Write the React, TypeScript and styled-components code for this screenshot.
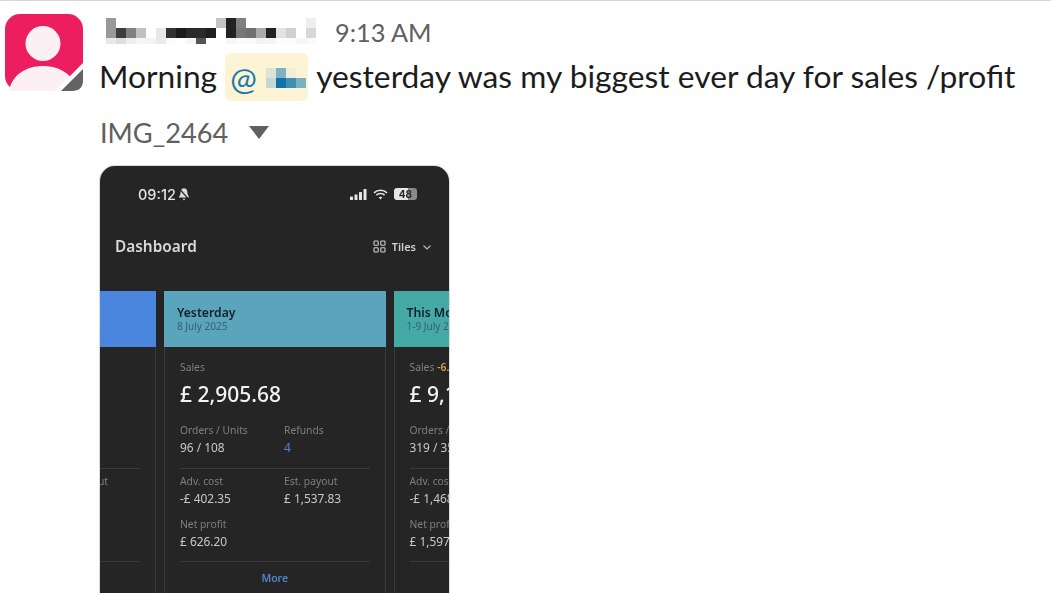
import styled, { createGlobalStyle } from "styled-components";

const GlobalStyle = createGlobalStyle`
  html, body {
    margin: 0;
    padding: 0;
    background: #ffffff;
    overflow: hidden;
  }
`;

const Page = styled.div`
  width: 1051px;
  height: 593px;
  box-sizing: border-box;
  border-top: 1px solid #d8d8d8;
  padding: 13px 0 0 5px;
  display: flex;
  align-items: flex-start;
  gap: 17px;
  overflow: hidden;
  font-family: "Lato", "Liberation Sans", sans-serif;
  color: #1d1c1d;
`;

const AvatarSvg = styled.svg`
  width: 78px;
  height: 77px;
  flex: none;
`;

const Body = styled.div`
  flex: 1;
  min-width: 0;
  display: flex;
  flex-direction: column;
`;

const HeadRow = styled.div`
  height: 31px;
  padding-top: 4px;
  display: flex;
  align-items: flex-start;
  gap: 19px;
`;

const Mosaic = styled.div<{ $w: number; $h: number; $cols: number }>`
  display: grid;
  grid-template-columns: repeat(${(p) => p.$cols}, ${(p) => p.$w}px);
  grid-auto-rows: ${(p) => p.$h}px;
  flex: none;
`;

const NameMosaic = styled(Mosaic)`
  margin-left: 6px;
  height: 26px;
  overflow: hidden;
`;

const Pixel = styled.span<{ $c: string }>`
  background: ${(p) => p.$c};
`;

const Time = styled.span`
  font-size: 25.3px;
  line-height: 28px;
  color: #616061;
`;

const Message = styled.div`
  margin: 4px 0 0 -1px;
  height: 46px;
  display: flex;
  align-items: center;
  gap: 8px;
  font-size: 31.75px;
  white-space: nowrap;
`;

const Mention = styled.span`
  width: 83px;
  height: 48px;
  margin-top: 2px;
  box-sizing: border-box;
  padding: 2px 0 0 5px;
  background: #fdf3d5;
  border-radius: 6px;
  display: flex;
  align-items: center;
  gap: 9px;
  color: #1a7aab;
`;

const FileRow = styled.div`
  margin-top: 14px;
  display: flex;
  align-items: center;
  gap: 21px;
  height: 38px;
  font-size: 27.2px;
  color: #616061;
`;

const Caret = styled.span`
  width: 0;
  height: 0;
  border-left: 10px solid transparent;
  border-right: 10px solid transparent;
  border-top: 13px solid #616061;
`;

const Phone = styled.div`
  margin-top: 15px;
  width: 349px;
  height: 440px;
  flex: none;
  background: #252525;
  border-radius: 15px 15px 0 0;
  box-shadow: 0 0 0 1px #dcdcdc;
  overflow: hidden;
  font-family: "Noto Sans", "Open Sans", sans-serif;
  color: #e8e8e8;
`;

const Screen = styled.div`
  filter: blur(0.45px);
`;

const StatusBar = styled.div`
  height: 56px;
  box-sizing: border-box;
  padding: 0 32px 0 38px;
  display: flex;
  align-items: center;
  justify-content: space-between;
`;

const Clock = styled.span`
  display: flex;
  align-items: center;
  gap: 1px;
  font-family: "Inter", "Noto Sans", sans-serif;
  font-size: 14.5px;
  font-weight: 500;
  color: #e4e4e4;
`;

const StatusIcons = styled.span`
  display: flex;
  align-items: center;
  gap: 6px;
`;

const Battery = styled.span`
  width: 23px;
  height: 12px;
  border-radius: 3px;
  background: linear-gradient(90deg, #e6e6e6 62%, #8a8a8a 62%);
  color: #252525;
  font-family: "Inter", sans-serif;
  font-size: 10px;
  font-weight: 700;
  line-height: 12px;
  text-align: center;
`;

const NavBar = styled.div`
  height: 49px;
  box-sizing: border-box;
  padding: 0 17px 0 15px;
  display: flex;
  align-items: center;
  justify-content: space-between;
`;

const NavTitle = styled.span`
  font-size: 15.4px;
  font-weight: 600;
  color: #d8d8d8;
`;

const ViewSwitch = styled.span`
  display: flex;
  align-items: center;
  gap: 6px;
  font-size: 11px;
  font-weight: 600;
  color: #cfcfcf;
`;

const Carousel = styled.div`
  margin-top: 20px;
  margin-left: -165.5px;
  display: flex;
  gap: 8px;
`;

const Tile = styled.div`
  width: 221.5px;
  flex: none;
`;

const TileHead = styled.div<{ $bg: string }>`
  height: 56px;
  box-sizing: border-box;
  padding: 14px 0 0 13px;
  background: ${(p) => p.$bg};
`;

const TileTitle = styled.div`
  font-size: 12.2px;
  font-weight: 600;
  line-height: 15px;
  color: #10202a;
  white-space: nowrap;
`;

const TileDate = styled.div`
  font-size: 10px;
  line-height: 13px;
  color: #35626f;
  white-space: nowrap;
`;

const TileBody = styled.div`
  height: 260px;
  box-sizing: border-box;
  padding: 13px 15px 0;
  border-left: 1px solid #3a3a3a;
  border-right: 1px solid #3a3a3a;
`;

const SmallLabel = styled.div`
  font-size: 10.3px;
  line-height: 14px;
  height: 14px;
  color: #7f7f7f;
  white-space: nowrap;
`;

const Delta = styled.span`
  color: #d9a441;
  font-weight: 600;
  margin-left: 3px;
`;

const BigValue = styled.div`
  height: 36px;
  margin-top: 2px;
  font-size: 21px;
  font-weight: 500;
  line-height: 36px;
  color: #f2f2f2;
  white-space: nowrap;
`;

const StatGrid = styled.div<{ $divided?: boolean }>`
  display: grid;
  grid-template-columns: 104px 1fr;
  row-gap: 9px;
  padding: ${(p) => (p.$divided ? "5px 0 10px" : "11px 0 11px")};
  border-bottom: 1px solid #3a3a3a;
`;

const StatValue = styled.div<{ $link?: boolean }>`
  font-size: 11.9px;
  line-height: 20px;
  height: 20px;
  color: ${(p) => (p.$link ? "#4f86c9" : "#c8c8c8")};
  white-space: nowrap;
`;

const More = styled.div`
  padding-top: 9px;
  text-align: center;
  font-size: 10.5px;
  font-weight: 600;
  color: #4f86c9;
`;

type StatItem = { label: string; value: string; link?: boolean };

type TileData = {
  bg: string;
  title: string;
  date: string;
  delta?: string;
  total: string;
  top: StatItem[];
  bottom: StatItem[];
};

const nameRows = [
  ["#999","#fff","#fff","#fff","#fff","#fff","#fff","#fff","#fff","#fff","#fff","#c4c4c4","#222","#808080","#fff","#fff","#fff","#fff","#fff","#fff","#eee"],
  ["#999","#3d3d3d","#808080","#c0c0c0","#fff","#e8e8e8","#333","#1c1c1c","#2a2a2a","#2a2a2a","#1f1f1f","#fff","#222","#777","#707070","#aaa","#222","#e2e2e2","#d0d0d0","#fff","#d8d8d8"],
  ["#e8e8e8","#ddd","#eee","#f6f6f6","#f3f3f3","#eaeaea","#fcfcfc","#fdfdfd","#f6f6f6","#555","#fff","#fff","#f6f6f6","#fafafa","#fafafa","#f3f3f3","#f4f4f4","#fcfcfc","#fcfcfc","#f6f6f6","#fafafa"],
];

const mentionRows = [
  ["#dde4d6", "#80b0c2", "#f0eed8", "transparent"],
  ["#c6d6d0", "#1272a8", "#408eb0", "#7ab0bf"],
];

const tiles: TileData[] = [
  {
    bg: "#4a86de",
    title: "",
    date: "",
    total: "",
    top: [
      { label: "", value: "" },
      { label: "", value: "" },
    ],
    bottom: [
      { label: "", value: "" },
      { label: "Est. payout", value: "" },
      { label: "", value: "" },
    ],
  },
  {
    bg: "#5aa5bb",
    title: "Yesterday",
    date: "8 July 2025",
    total: "£ 2,905.68",
    top: [
      { label: "Orders / Units", value: "96 / 108" },
      { label: "Refunds", value: "4", link: true },
    ],
    bottom: [
      { label: "Adv. cost", value: "-£ 402.35" },
      { label: "Est. payout", value: "£ 1,537.83" },
      { label: "Net profit", value: "£ 626.20" },
    ],
  },
  {
    bg: "#45a9a6",
    title: "This Month",
    date: "1-9 July 2025",
    delta: "-6.2%",
    total: "£ 9,174.20",
    top: [
      { label: "Orders / Units", value: "319 / 358" },
      { label: "Refunds", value: "11", link: true },
    ],
    bottom: [
      { label: "Adv. cost", value: "-£ 1,468.02" },
      { label: "Est. payout", value: "£ 5,120.44" },
      { label: "Net profit", value: "£ 1,597.31" },
    ],
  },
];

const StatBlock = ({ item }: { item: StatItem }) => (
  <div>
    <SmallLabel>{item.label}</SmallLabel>
    <StatValue $link={item.link}>{item.value}</StatValue>
  </div>
);

const App = () => {
  return (
    <Page>
      <GlobalStyle />
      <AvatarSvg viewBox="0 0 78 77">
        <rect x="0" y="0" width="78" height="77" rx="15" fill="#ec1e5f" />
        <circle cx="38" cy="29.5" r="17.5" fill="#fdf0f5" />
        <path d="M4 77 C7 60 22 52 38 52 C54 52 69 60 72 77 Z" fill="#fdf0f5" />
        <path d="M50 77 L78 49 L78 77 Z" fill="#ffffff" />
        <path d="M56 77 L78 55 L78 66 Q78 77 67 77 Z" fill="#636363" />
      </AvatarSvg>
      <Body>
        <HeadRow>
          <NameMosaic $w={10} $h={10} $cols={21}>
            {nameRows.flat().map((c, i) => (
              <Pixel key={i} $c={c} />
            ))}
          </NameMosaic>
          <Time>9:13 AM</Time>
        </HeadRow>
        <Message>
          Morning
          <Mention>
            @
            <Mosaic $w={10} $h={10} $cols={4}>
              {mentionRows.flat().map((c, i) => (
                <Pixel key={i} $c={c} />
              ))}
            </Mosaic>
          </Mention>
          yesterday was my biggest ever day for sales /profit
        </Message>
        <FileRow>
          IMG_2464
          <Caret />
        </FileRow>
        <Phone>
          <Screen>
            <StatusBar>
              <Clock>
                09:12
                <svg width="14" height="14" viewBox="0 0 12 12">
                  <path d="M6 1 C8.5 1 9 3.5 9 6 L10.5 9 L1.5 9 L3 6 C3 3.5 3.5 1 6 1 Z M4.8 10 L7.2 10 L6 11.5 Z" fill="#dcdcdc" />
                  <path d="M2 1.5 L10.5 11" stroke="#252525" strokeWidth="1" />
                </svg>
              </Clock>
              <StatusIcons>
                <svg width="17" height="11" viewBox="0 0 17 11">
                  <rect x="0" y="7.5" width="3" height="3.5" rx="0.6" fill="#e6e6e6" />
                  <rect x="4.5" y="5.5" width="3" height="5.5" rx="0.6" fill="#e6e6e6" />
                  <rect x="9" y="3" width="3" height="8" rx="0.6" fill="#e6e6e6" />
                  <rect x="13.5" y="0" width="3" height="11" rx="0.6" fill="#e6e6e6" />
                </svg>
                <svg width="15" height="11" viewBox="0 0 15 11" fill="none" stroke="#e6e6e6" strokeWidth="1.6">
                  <path d="M1 3.8 C4.6 0.4 10.4 0.4 14 3.8" />
                  <path d="M3.4 6.1 C5.6 4 9.4 4 11.6 6.1" />
                  <path d="M7.5 10.6 L5.6 8.3 C6.6 7.5 8.4 7.5 9.4 8.3 Z" fill="#e6e6e6" stroke="none" />
                </svg>
                <Battery>48</Battery>
              </StatusIcons>
            </StatusBar>
            <NavBar>
              <NavTitle>Dashboard</NavTitle>
              <ViewSwitch>
                <svg width="13" height="13" viewBox="0 0 13 13" fill="none" stroke="#cfcfcf" strokeWidth="1.1">
                  <rect x="1" y="1" width="4.2" height="4.2" rx="0.8" />
                  <rect x="7.8" y="1" width="4.2" height="4.2" rx="0.8" />
                  <rect x="1" y="7.8" width="4.2" height="4.2" rx="0.8" />
                  <rect x="7.8" y="7.8" width="4.2" height="4.2" rx="0.8" />
                </svg>
                Tiles
                <svg width="10" height="10" viewBox="0 0 10 10" fill="none" stroke="#bdbdbd" strokeWidth="1.1">
                  <path d="M1.5 3.5 L5 7 L8.5 3.5" />
                </svg>
              </ViewSwitch>
            </NavBar>
            <Carousel>
              {tiles.map((t, i) => (
                <Tile key={i}>
                  <TileHead $bg={t.bg}>
                    <TileTitle>{t.title}</TileTitle>
                    <TileDate>{t.date}</TileDate>
                  </TileHead>
                  <TileBody>
                    <SmallLabel>
                      {t.total ? "Sales" : ""}
                      {t.delta && <Delta>{t.delta}</Delta>}
                    </SmallLabel>
                    <BigValue>{t.total}</BigValue>
                    <StatGrid>
                      {t.top.map((s, j) => (
                        <StatBlock key={j} item={s} />
                      ))}
                    </StatGrid>
                    <StatGrid $divided>
                      {t.bottom.map((s, j) => (
                        <StatBlock key={j} item={s} />
                      ))}
                    </StatGrid>
                    {t.total && <More>More</More>}
                  </TileBody>
                </Tile>
              ))}
            </Carousel>
          </Screen>
        </Phone>
      </Body>
    </Page>
  );
};

export default App;
